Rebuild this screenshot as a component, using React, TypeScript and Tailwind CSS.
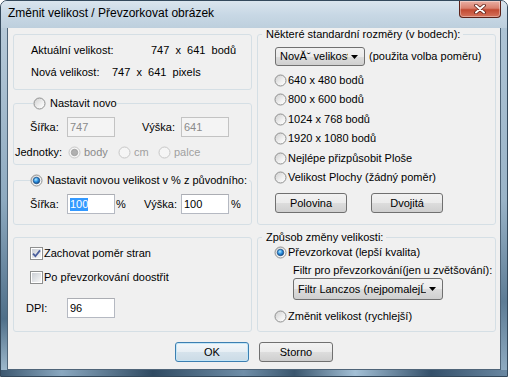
import React from "react";

function Radio({ checked = false, disabled = false }: { checked?: boolean; disabled?: boolean }) {
  return (
    <svg width="13" height="13" viewBox="0 0 13 13" className="shrink-0">
      <defs>
        <linearGradient id="radioFill" x1="0" y1="0" x2="1" y2="1">
          <stop offset="0" stopColor="#cdcdcd" />
          <stop offset="0.6" stopColor="#f1f1f1" />
          <stop offset="1" stopColor="#ffffff" />
        </linearGradient>
        <radialGradient id="radioDot" cx="0.4" cy="0.35" r="0.75">
          <stop offset="0" stopColor="#b6ecff" />
          <stop offset="0.45" stopColor="#2f95e6" />
          <stop offset="1" stopColor="#0a3c78" />
        </radialGradient>
      </defs>
      <circle
        cx="6.5"
        cy="6.5"
        r="5.5"
        fill={disabled ? "#f5f5f5" : "url(#radioFill)"}
        stroke={disabled ? "#c6c6c6" : "#8e8f8f"}
      />
      {checked && (
        <circle
          cx="6.5"
          cy="6.5"
          r="3.2"
          fill={disabled ? "#b0b0b0" : "url(#radioDot)"}
          stroke={disabled ? "#9a9a9a" : "#1a4c84"}
          strokeWidth="0.8"
        />
      )}
    </svg>
  );
}

function Checkbox({ checked = false }: { checked?: boolean }) {
  return (
    <svg width="13" height="13" viewBox="0 0 13 13" className="shrink-0">
      <defs>
        <linearGradient id="checkFill" x1="0" y1="0" x2="1" y2="1">
          <stop offset="0" stopColor="#cbcfd5" />
          <stop offset="1" stopColor="#f7f7f7" />
        </linearGradient>
      </defs>
      <rect x="0.5" y="0.5" width="12" height="12" fill="#ffffff" stroke="#8e8f8f" />
      <rect x="2" y="2" width="9" height="9" fill="url(#checkFill)" />
      {checked && (
        <path d="M3 6.6 L5.4 9.2 L10 3.4" fill="none" stroke="#4a5e9c" strokeWidth="1.8" />
      )}
    </svg>
  );
}

function Arrow() {
  return (
    <svg width="7" height="4" viewBox="0 0 7 4" className="shrink-0">
      <path d="M0 0 H7 L3.5 4 Z" fill="#000" />
    </svg>
  );
}

function TextBox({ value, disabled = false, selected = false }: { value: string; disabled?: boolean; selected?: boolean }) {
  return (
    <div
      className={`flex h-[20px] w-[48px] shrink-0 items-center border pl-[2px] ${
        disabled
          ? "border-[#c3c3c3] bg-[#f4f4f4] text-[#8a8a8a]"
          : "border-[#b5b9c2] border-t-[#abadb3] bg-white text-black"
      }`}
    >
      <span className={selected ? "bg-[#3399ff] text-white" : ""}>{value}</span>
    </div>
  );
}

function Button({ label, width, primary = false }: { label: string; width: string; primary?: boolean }) {
  return (
    <button
      className={`flex h-[20px] ${width} items-center justify-center rounded-[3px] border ${
        primary
          ? "border-[#3c7fb1] bg-[linear-gradient(180deg,#f3f7fa_0%,#e6eef4_50%,#d6e3ec_50%,#cbdbe6_100%)] shadow-[inset_0_0_0_1px_#c4e6f7]"
          : "border-[#707070] bg-[linear-gradient(180deg,#f2f2f2_0%,#ebebeb_50%,#dddddd_50%,#cfcfcf_100%)]"
      }`}
    >
      {label}
    </button>
  );
}

function Select({ text, width, height }: { text: string; width: string; height: string }) {
  return (
    <div
      className={`flex ${height} ${width} shrink-0 items-center gap-[3px] rounded-[3px] border border-[#707070] bg-[linear-gradient(180deg,#f2f2f2_0%,#ebebeb_50%,#dddddd_50%,#cfcfcf_100%)] pl-[4px] pr-[6px]`}
    >
      <span className="min-w-0 flex-1 overflow-hidden whitespace-nowrap">{text}</span>
      <Arrow />
    </div>
  );
}

function RadioRow({ label, checked = false }: { label: string; checked?: boolean }) {
  return (
    <div className="flex h-[19.5px] items-center gap-[1px]">
      <Radio checked={checked} />
      <span>{label}</span>
    </div>
  );
}

export default function App() {
  return (
    <div className="flex h-[377px] w-[508px] flex-col overflow-hidden rounded-t-[7px] border border-[#34495c] bg-[linear-gradient(180deg,#cfdde8_0%,#bfd1df_30%,#a7bfd1_75%,#7f9bb2_100%)] font-['Liberation_Sans',Arial,sans-serif] text-[11px] leading-[13px] text-black">
      {/* title bar */}
      <div className="flex h-[27px] shrink-0 items-start justify-between bg-[linear-gradient(180deg,#dae5ee_0%,#c8d8e5_50%,#bdcfdd_100%)] pl-[7px] pr-[6px]">
        <span className="pt-[5px] text-[12px] leading-[15px] text-black">
          Změnit velikost / Převzorkovat obrázek
        </span>
        <div className="flex h-[17px] w-[42px] items-center justify-center rounded-b-[4px] border border-t-0 border-[#5c2219] bg-[linear-gradient(180deg,#eab0a4_0%,#d9806e_45%,#c24a32_55%,#d5735c_100%)] shadow-[inset_0_0_0_1px_rgba(255,255,255,0.35)]">
          <svg width="12" height="10" viewBox="0 0 12 10">
            <path d="M2 1.5 L10 8.5 M10 1.5 L2 8.5" stroke="#5a1e16" strokeWidth="3.6" strokeLinecap="round" />
            <path d="M2 1.5 L10 8.5 M10 1.5 L2 8.5" stroke="#ffffff" strokeWidth="2" strokeLinecap="round" />
          </svg>
        </div>
      </div>

      {/* middle: frame + client */}
      <div className="flex h-[342px] shrink-0">
        <div className="w-[6px] bg-[linear-gradient(180deg,#b7cad9_0%,#8eaac0_50%,#4f6f89_85%,#9db8cc_100%)]" />
        <div className="flex w-[494px] flex-col border-x border-b border-[#4e6478] bg-[#f0f0f0]">
          <div className="grid grid-cols-[239px_239px] gap-x-[5px] pl-[5px]">
            {/* left column */}
            <div className="flex flex-col">
              <div className="mt-[6px] h-[56px] rounded-[3px] border border-[#d5dfe5] pl-[17px] pt-[9px]">
                <div className="flex h-[13px]">
                  <span className="w-[120px]">Aktuální velikost:</span>
                  <span className="whitespace-pre">747  x  641  bodů</span>
                </div>
                <div className="mt-[9px] flex h-[13px]">
                  <span className="w-[81px]">Nová velikost:</span>
                  <span className="whitespace-pre">747  x  641  pixels</span>
                </div>
              </div>

              <fieldset className="mt-[7px] h-[68px] rounded-[3px] border border-[#d5dfe5]">
                <legend className="ml-[19px] flex h-[13px] w-[84px] items-center gap-[4px] overflow-hidden whitespace-nowrap">
                  <Radio />
                  <span>Nastavit novou</span>
                </legend>
                <div className="mt-[7px] flex h-[20px] items-center pl-[16px]">
                  <span className="w-[37px]">Šířka:</span>
                  <TextBox value="747" disabled />
                  <span className="ml-[27px] w-[39px]">Výška:</span>
                  <TextBox value="641" disabled />
                </div>
                <div className="mt-[9px] flex h-[13px] items-center pl-[1px]">
                  <span className="w-[53px]">Jednotky:</span>
                  <div className="flex w-[50px] items-center gap-[3px]">
                    <Radio checked disabled />
                    <span className="text-[#8a8a8a]">body</span>
                  </div>
                  <div className="flex w-[40px] items-center gap-[3px]">
                    <Radio disabled />
                    <span className="text-[#a0a0a0]">cm</span>
                  </div>
                  <div className="flex items-center gap-[3px]">
                    <Radio disabled />
                    <span className="text-[#a0a0a0]">palce</span>
                  </div>
                </div>
              </fieldset>

              <fieldset className="mt-[9px] h-[51px] rounded-[3px] border border-[#d5dfe5]">
                <legend className="ml-[16px] flex h-[13px] items-center gap-[4px] pr-[2px] whitespace-nowrap">
                  <Radio checked />
                  <span>Nastavit novou velikost v % z původního:</span>
                </legend>
                <div className="mt-[7px] flex h-[20px] items-center pl-[16px]">
                  <span className="w-[37px]">Šířka:</span>
                  <TextBox value="100" selected />
                  <span className="w-[29px] pl-[1px]">%</span>
                  <span className="w-[37px]">Výška:</span>
                  <TextBox value="100" />
                  <span className="pl-[2px]">%</span>
                </div>
              </fieldset>

              <div className="mt-[12px] h-[95px] rounded-[3px] border border-[#d5dfe5] pt-[9px]">
                <div className="flex h-[13px] items-center gap-[1px] pl-[16px]">
                  <Checkbox checked />
                  <span>Zachovat poměr stran</span>
                </div>
                <div className="mt-[11px] flex h-[13px] items-center gap-[1px] pl-[16px]">
                  <Checkbox />
                  <span>Po převzorkování doostřit</span>
                </div>
                <div className="mt-[14px] flex h-[20px] items-center pl-[12px]">
                  <span className="w-[41px]">DPI:</span>
                  <TextBox value="96" />
                </div>
              </div>
            </div>

            {/* right column */}
            <div className="flex flex-col">
              <fieldset className="h-[197px] rounded-[3px] border border-[#d5dfe5]">
                <legend className="ml-[4px] h-[13px] pl-[4px] pr-[3px] whitespace-nowrap">
                  Některé standardní rozměry (v bodech):
                </legend>
                <div className="mt-[6px] flex items-center gap-[4px] pl-[17px]">
                  <Select text="NovĂ˘ velikost" width="w-[90px]" height="h-[19px]" />
                  <span>(použita volba poměru)</span>
                </div>
                <div className="mt-[4.5px] flex flex-col pl-[16px]">
                  <RadioRow label="640 x 480 bodů" />
                  <RadioRow label="800 x 600 bodů" />
                  <RadioRow label="1024 x 768 bodů" />
                  <RadioRow label="1920 x 1080 bodů" />
                  <RadioRow label="Nejlépe přizpůsobit Ploše" />
                  <RadioRow label="Velikost Plochy (žádný poměr)" />
                </div>
                <div className="mt-[5.5px] flex gap-[24px] pl-[17px]">
                  <Button label="Polovina" width="w-[72px]" />
                  <Button label="Dvojitá" width="w-[72px]" />
                </div>
              </fieldset>

              <fieldset className="mt-[6px] h-[101px] rounded-[3px] border border-[#d5dfe5]">
                <legend className="ml-[4px] h-[13px] pl-[4px] pr-[3px] whitespace-nowrap">
                  Způsob změny velikosti:
                </legend>
                <div className="mt-[2px] flex h-[13px] items-center gap-[1px] pl-[16px]">
                  <Radio checked />
                  <span>Převzorkovat (lepší kvalita)</span>
                </div>
                <div className="mt-[5px] h-[13px] pl-[35px] whitespace-nowrap">
                  Filtr pro převzorkování(jen u zvětšování):
                </div>
                <div className="mt-[1px] pl-[35px]">
                  <Select text="Filtr Lanczos (nejpomalejĹˇĂ­)" width="w-[150px]" height="h-[22px]" />
                </div>
                <div className="mt-[10px] flex h-[13px] items-center gap-[1px] pl-[16px]">
                  <Radio />
                  <span>Změnit velikost (rychlejší)</span>
                </div>
              </fieldset>
            </div>
          </div>

          <div className="mt-[10px] flex justify-center gap-[10px]">
            <Button label="OK" width="w-[74px]" primary />
            <Button label="Storno" width="w-[74px]" />
          </div>
        </div>
        <div className="w-[6px] bg-[linear-gradient(180deg,#aec4d5_0%,#9ab4c8_50%,#5d7c95_80%,#8eaac0_100%)]" />
      </div>

      {/* bottom frame */}
      <div className="h-[6px] shrink-0 bg-[linear-gradient(90deg,#3c5870_0%,#8aa8c0_12%,#2f4a62_30%,#6f8ea8_48%,#3a566e_58%,#a3c0d6_70%,#34506a_85%,#6a88a2_100%)]" />
    </div>
  );
}
